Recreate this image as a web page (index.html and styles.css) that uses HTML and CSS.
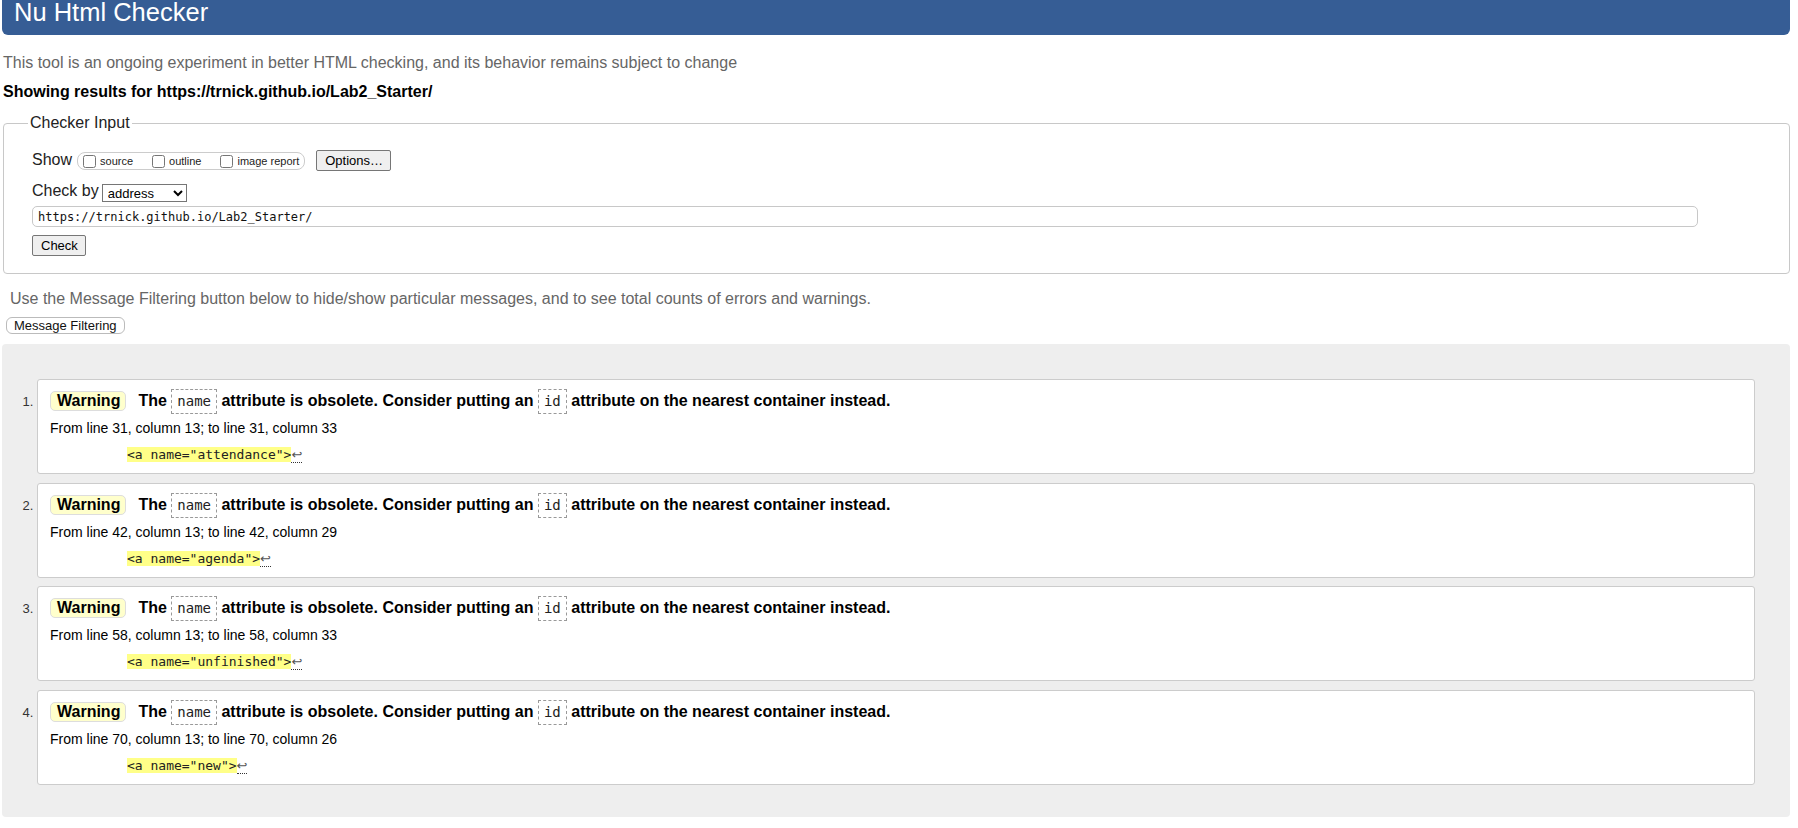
FILE: index.html
```html
<!DOCTYPE html>
<html lang="en">
<head>
<meta charset="utf-8">
<title>Nu Html Checker</title>
<link rel="stylesheet" href="styles.css">
</head>
<body>
<div class="page">
  <h1 class="title">Nu Html Checker</h1>
  <p class="intro">This tool is an ongoing experiment in better HTML checking, and its behavior remains subject to change</p>
  <p class="showing">Showing results for https://trnick.github.io/Lab2_Starter/</p>

  <fieldset class="checker">
    <legend>Checker Input</legend>
    <div class="row row-show">
      <span class="lbl lbl-show">Show</span>
      <fieldset class="opts">
        <label class="opt"><input type="checkbox">source</label>
        <label class="opt"><input type="checkbox">outline</label>
        <label class="opt"><input type="checkbox">image report</label>
      </fieldset>
      <button class="btn btn-options" type="button">Options…</button>
    </div>
    <div class="row row-by">
      <span class="lbl">Check by</span>
      <select class="by"><option>address</option></select>
    </div>
    <input class="url" type="text" value="https://trnick.github.io/Lab2_Starter/">
    <div class="row row-check"><button class="btn btn-check" type="button">Check</button></div>
  </fieldset>

  <p class="filter-note">Use the Message Filtering button below to hide/show particular messages, and to see total counts of errors and warnings.</p>
  <button class="btn-filter" type="button">Message Filtering</button>

  <div class="results">
    <ol class="msgs">
      <li class="msg">
        <p class="m-head"><span class="badge">Warning</span>The <code class="code">name</code> attribute is obsolete. Consider putting an <code class="code">id</code> attribute on the nearest container instead.</p>
        <p class="m-loc">From line 31, column 13; to line 31, column 33</p>
        <p class="m-ext"><code class="hl">&lt;a name="attendance"&gt;</code><code class="lf">↩</code></p>
      </li>
      <li class="msg">
        <p class="m-head"><span class="badge">Warning</span>The <code class="code">name</code> attribute is obsolete. Consider putting an <code class="code">id</code> attribute on the nearest container instead.</p>
        <p class="m-loc">From line 42, column 13; to line 42, column 29</p>
        <p class="m-ext"><code class="hl">&lt;a name="agenda"&gt;</code><code class="lf">↩</code></p>
      </li>
      <li class="msg">
        <p class="m-head"><span class="badge">Warning</span>The <code class="code">name</code> attribute is obsolete. Consider putting an <code class="code">id</code> attribute on the nearest container instead.</p>
        <p class="m-loc">From line 58, column 13; to line 58, column 33</p>
        <p class="m-ext"><code class="hl">&lt;a name="unfinished"&gt;</code><code class="lf">↩</code></p>
      </li>
      <li class="msg">
        <p class="m-head"><span class="badge">Warning</span>The <code class="code">name</code> attribute is obsolete. Consider putting an <code class="code">id</code> attribute on the nearest container instead.</p>
        <p class="m-loc">From line 70, column 13; to line 70, column 26</p>
        <p class="m-ext"><code class="hl">&lt;a name="new"&gt;</code><code class="lf">↩</code></p>
      </li>
    </ol>
  </div>
</div>
</body>
</html>
```

FILE: styles.css
```css
html, body {
  margin: 0;
  padding: 0;
  background: #fff;
}

body {
  font-family: "Liberation Sans", Arial, sans-serif;
  color: #000;
}

.page {
  padding: 0 8px 0 2px;
}

.title {
  margin: 0;
  height: 35px;
  padding: 0 12px;
  background: #365d95;
  color: #fff;
  font-size: 25.5px;
  line-height: 25px;
  font-weight: normal;
  border-radius: 0 0 6px 6px;
}

.intro {
  margin: 19px 0 0 1px;
  color: #666;
  font-size: 16px;
  line-height: 18px;
}

.showing {
  margin: 11px 0 0 1px;
  font-size: 16px;
  line-height: 18px;
  font-weight: bold;
}

.checker {
  margin: 13px 0 0 1px;
  padding: 17px 28px 17px;
  border: 1px solid #c8c8c8;
  border-radius: 4px;
  min-inline-size: 0;
}

.checker legend {
  padding: 0 2px;
  margin-left: -4px;
  font-size: 16px;
  line-height: 18px;
  color: #222;
}

.row {
  display: flex;
  align-items: flex-start;
}

.lbl {
  font-size: 16px;
  line-height: 18px;
  color: #222;
}

.lbl-show {
  margin-top: 2px;
}

.row-show {
  height: 23px;
}

.opts {
  display: flex;
  align-items: center;
  margin: 3px 0 0 5px;
  padding: 0 5px;
  height: 18px;
  box-sizing: border-box;
  border: 1px solid #ccc;
  border-radius: 8px;
  min-inline-size: 0;
}

.opt {
  display: flex;
  align-items: center;
  font-size: 11px;
  line-height: 16px;
  color: #222;
  margin-right: 19px;
}

.opt:last-child {
  margin-right: 0;
}

.opt input {
  margin: 0 4px 0 0;
  width: 13px;
  height: 13px;
}

.btn {
  font-family: "Liberation Sans", Arial, sans-serif;
  font-size: 13px;
  line-height: 15px;
  color: #000;
  background: #efefef;
  border: 1px solid #767676;
  border-radius: 2px;
  height: 21px;
  padding: 0 8px;
  box-sizing: border-box;
}

.btn-options {
  margin: 1px 0 0 11px;
  width: 75px;
}

.row-by {
  margin-top: 10px;
  height: 20px;
}

.by {
  margin: 2px 0 0 3px;
  width: 85px;
  height: 18px;
  box-sizing: border-box;
  padding: 0 0 0 1px;
  font-family: "Liberation Sans", Arial, sans-serif;
  font-size: 13px;
  color: #000;
  background: #fff;
  border: 1px solid #767676;
  border-radius: 0;
}

.url {
  display: block;
  margin: 4px 0 0;
  width: 1666px;
  height: 21px;
  box-sizing: border-box;
  padding: 0 5px;
  border: 1px solid #c8c8c8;
  border-radius: 5px;
  font-family: "DejaVu Sans Mono", monospace;
  font-size: 12px;
  color: #111;
  background: #fff;
}

.row-check {
  margin-top: 8px;
}

.btn-check {
  width: 54px;
}

.filter-note {
  margin: 16px 0 0;
  padding-left: 8px;
  color: #666;
  font-size: 16px;
  line-height: 18px;
}

.btn-filter {
  display: block;
  margin: 9px 0 0 4px;
  height: 17px;
  padding: 0 7px;
  box-sizing: border-box;
  background: #fff;
  border: 1px solid #bbb;
  border-radius: 6px;
  font-family: "Liberation Sans", Arial, sans-serif;
  font-size: 13px;
  line-height: 15px;
  color: #111;
}

.results {
  margin-top: 10px;
  background: #eee;
  border-radius: 4px;
  padding: 35px 35px 32px;
}

.msgs {
  list-style: decimal;
  margin: 0;
  padding: 0;
}

.msg {
  background: #fff;
  border: 1px solid #ccc;
  border-radius: 3px;
  padding: 9px 12px 9px;
  margin-bottom: 8.67px;
  font-size: 14px;
  line-height: 18px;
}

.msg:last-child {
  margin-bottom: 0;
}

.msg::marker {
  font-size: 13px;
  color: #333;
}

.msg p {
  margin: 0;
}

.m-head {
  font-size: 16px;
  line-height: 18px;
  font-weight: bold;
}

.badge {
  display: inline-block;
  background: #ffc;
  border: 1px solid #ddd;
  border-radius: 5px;
  padding: 0 5px 0 6px;
  margin-right: 12px;
  line-height: 18px;
}

.code {
  display: inline-block;
  font-family: "DejaVu Sans Mono", monospace;
  font-weight: normal;
  font-size: 14px;
  line-height: 17px;
  padding: 3px 5px;
  border: 1px dashed #999;
  color: #222;
}

.msg .m-loc {
  margin-top: 5px;
  font-size: 14px;
}

.msg .m-ext {
  margin: 8px 0 0 77px;
}

.hl {
  background: #ff8;
  font-family: "DejaVu Sans Mono", monospace;
  font-size: 13px;
  color: #222;
}

.lf {
  font-family: "DejaVu Sans", sans-serif;
  font-size: 13px;
  color: #555;
  border-bottom: 1px dotted #333;
}
```
